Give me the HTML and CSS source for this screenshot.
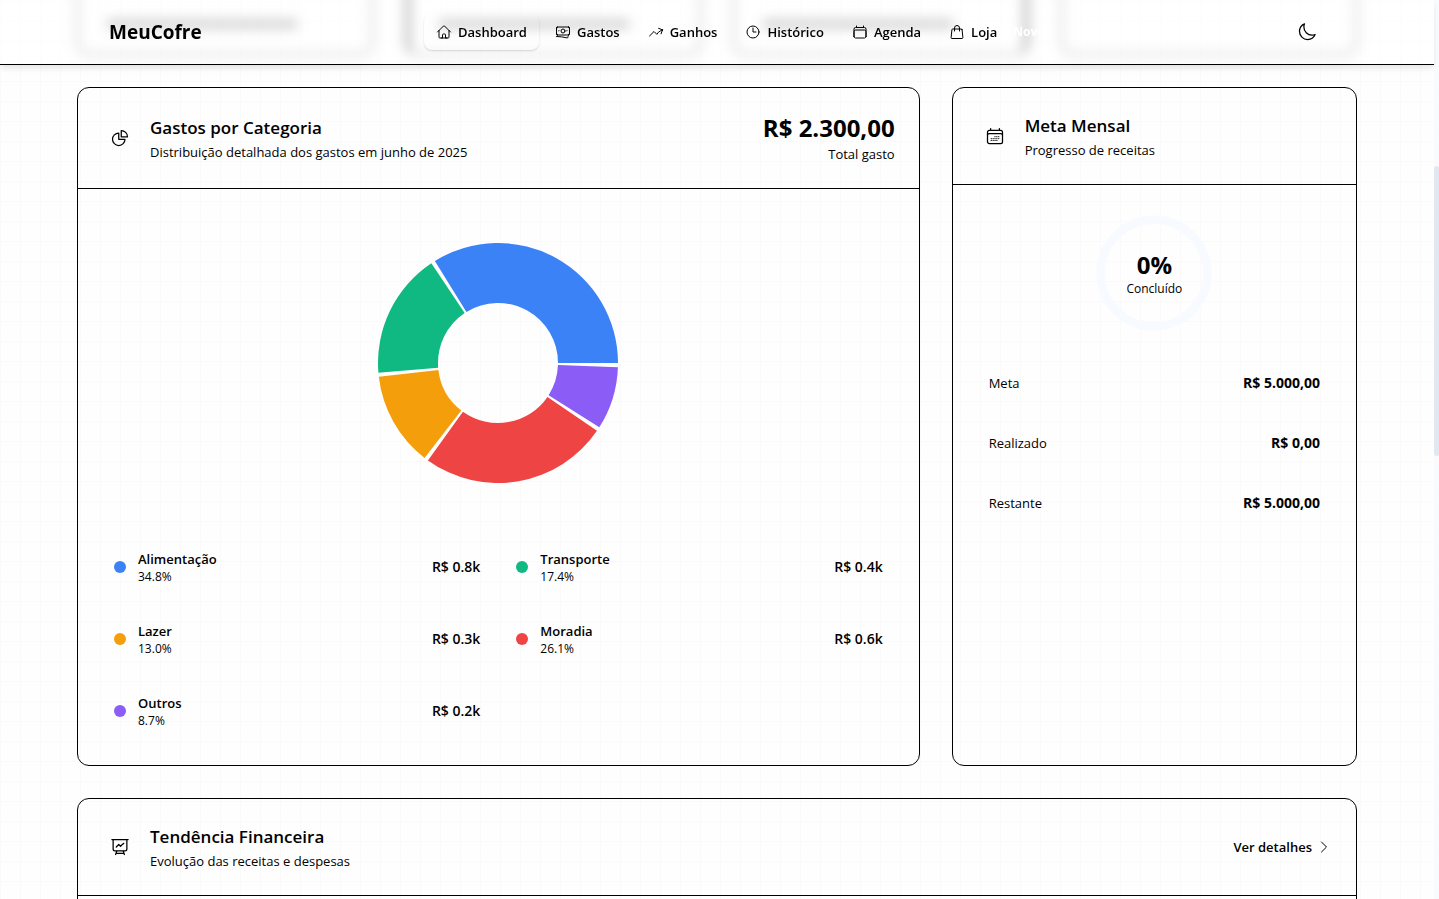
FILE: index.html
```html
<!DOCTYPE html>
<html lang="pt-BR">
  <head>
    <meta charset="UTF-8" />
    <meta name="viewport" content="width=device-width, initial-scale=1.0" />
    <title>MeuCofre</title>
    <link rel="stylesheet" href="styles.css">
  </head>
  <body>
    <header class="topbar">
      <div class="topbar-inner">
        <a class="logo" href="#">MeuCofre</a>
        <nav class="nav">
          <a class="nav-link active" href="#">
            <svg class="icon-sm" viewBox="0 0 24 24"><path d="m2.25 12 8.954-8.955a1.126 1.126 0 0 1 1.591 0L21.75 12M4.5 9.75v10.125c0 .621.504 1.125 1.125 1.125H9.75v-4.875c0-.621.504-1.125 1.125-1.125h2.25c.621 0 1.125.504 1.125 1.125V21h4.125c.621 0 1.125-.504 1.125-1.125V9.75M8.25 21h8.25" /></svg>
            Dashboard
          </a>
          <a class="nav-link" href="#">
            <svg class="icon-sm" viewBox="0 0 24 24"><path d="M2.25 18.75a60.07 60.07 0 0 1 15.797 2.101c.727.198 1.453-.342 1.453-1.096V18.75M3.75 4.5v.75A.75.75 0 0 1 3 6h-.75m0 0v-.375c0-.621.504-1.125 1.125-1.125H20.25M2.25 6v9m18-10.5v.75c0 .414.336.75.75.75h.75m-1.5-1.5h.375c.621 0 1.125.504 1.125 1.125v9.75c0 .621-.504 1.125-1.125 1.125h-.375m1.5-1.5H21a.75.75 0 0 0-.75.75v.75m0 0H3.75m0 0h-.375a1.125 1.125 0 0 1-1.125-1.125V15m1.5 1.5v-.75A.75.75 0 0 0 3 15h-.75M15 10.5a3 3 0 1 1-6 0 3 3 0 0 1 6 0Zm3 0h.008v.008H18V10.5Zm-12 0h.008v.008H6V10.5Z" /></svg>
            Gastos
          </a>
          <a class="nav-link" href="#">
            <svg class="icon-sm" viewBox="0 0 24 24"><path d="M2.25 18 9 11.25l4.306 4.306a11.95 11.95 0 0 1 5.814-5.518l2.74-1.22m0 0-5.94-2.281m5.94 2.28-2.28 5.941" /></svg>
            Ganhos
          </a>
          <a class="nav-link" href="#">
            <svg class="icon-sm" viewBox="0 0 24 24"><path d="M12 6v6h4.5m4.5 0a9 9 0 1 1-18 0 9 9 0 0 1 18 0Z" /></svg>
            Histórico
          </a>
          <a class="nav-link" href="#">
            <svg class="icon-sm" viewBox="0 0 24 24"><path d="M6.75 3v2.25M17.25 3v2.25M3 18.75V7.5a2.25 2.25 0 0 1 2.25-2.25h13.5A2.25 2.25 0 0 1 21 7.5v11.25m-18 0A2.25 2.25 0 0 0 5.25 21h13.5A2.25 2.25 0 0 0 21 18.75m-18 0v-7.5A2.25 2.25 0 0 1 5.25 9h13.5A2.25 2.25 0 0 1 21 11.25v7.5" /></svg>
            Agenda
          </a>
          <a class="nav-link" href="#">
            <svg class="icon-sm" viewBox="0 0 24 24"><path d="M15.75 10.5V6a3.75 3.75 0 1 0-7.5 0v4.5m11.356-1.993 1.263 12c.07.665-.45 1.243-1.119 1.243H4.25a1.125 1.125 0 0 1-1.12-1.243l1.264-12A1.125 1.125 0 0 1 5.513 7.5h12.974c.576 0 1.059.435 1.119 1.007Z" /></svg>
            Loja
            <span class="badge">Novo</span>
          </a>
        </nav>
        <button class="theme-btn" type="button" aria-label="Alternar tema">
          <svg class="icon" viewBox="0 0 24 24"><path d="M21.752 15.002A9.72 9.72 0 0 1 18 15.75c-5.385 0-9.75-4.365-9.75-9.75 0-1.33.266-2.597.748-3.752A9.753 9.753 0 0 0 3 11.25C3 16.635 7.365 21 12.75 21a9.753 9.753 0 0 0 9.002-5.998Z" /></svg>
        </button>
      </div>
    </header>

    <div class="scrollbar"><div class="thumb"></div></div>

    <main class="page">
      <!-- bottom of the summary cards, under the header -->
      <section class="summary">
        <div class="summary-card"><span class="bar"></span></div>
        <div class="summary-card accent-left"><span class="bar"></span></div>
        <div class="summary-card accent-right"><span class="bar"></span></div>
        <div class="summary-card"></div>
      </section>

      <section class="grid">
        <article class="card wide">
          <div class="card-header">
            <div class="heading">
              <svg class="icon" viewBox="0 0 24 24"><path d="M10.5 6a7.5 7.5 0 1 0 7.5 7.5h-7.5V6Z" /><path d="M13.5 10.5H21A7.5 7.5 0 0 0 13.5 3v7.5Z" /></svg>
              <div>
                <h3>Gastos por Categoria</h3>
                <p>Distribuição detalhada dos gastos em junho de 2025</p>
              </div>
            </div>
            <div class="total">
              <div class="big">R$ 2.300,00</div>
              <p>Total gasto</p>
            </div>
          </div>
          <div class="card-body">
            <div class="chart">
              <svg id="donut" width="240" height="240" viewBox="-120 -120 240 240"></svg>
            </div>
            <div class="legend">
              <div class="legend-item">
                <span class="dot blue"></span>
                <div class="label"><strong>Alimentação</strong><small>34.8%</small></div>
                <span class="value">R$ 0.8k</span>
              </div>
              <div class="legend-item">
                <span class="dot green"></span>
                <div class="label"><strong>Transporte</strong><small>17.4%</small></div>
                <span class="value">R$ 0.4k</span>
              </div>
              <div class="legend-item">
                <span class="dot orange"></span>
                <div class="label"><strong>Lazer</strong><small>13.0%</small></div>
                <span class="value">R$ 0.3k</span>
              </div>
              <div class="legend-item">
                <span class="dot red"></span>
                <div class="label"><strong>Moradia</strong><small>26.1%</small></div>
                <span class="value">R$ 0.6k</span>
              </div>
              <div class="legend-item">
                <span class="dot purple"></span>
                <div class="label"><strong>Outros</strong><small>8.7%</small></div>
                <span class="value">R$ 0.2k</span>
              </div>
            </div>
          </div>
        </article>

        <article class="card">
          <div class="card-header">
            <div class="heading">
              <svg class="icon" viewBox="0 0 24 24"><path d="M6.75 3v2.25M17.25 3v2.25M3 18.75V7.5a2.25 2.25 0 0 1 2.25-2.25h13.5A2.25 2.25 0 0 1 21 7.5v11.25m-18 0A2.25 2.25 0 0 0 5.25 21h13.5A2.25 2.25 0 0 0 21 18.75m-18 0v-7.5A2.25 2.25 0 0 1 5.25 9h13.5A2.25 2.25 0 0 1 21 11.25v7.5m-9-6h.008v.008H12v-.008ZM12 15h.008v.008H12V15Zm0 2.25h.008v.008H12v-.008ZM9.75 15h.008v.008H9.75V15Zm0 2.25h.008v.008H9.75v-.008ZM7.5 15h.008v.008H7.5V15Zm0 2.25h.008v.008H7.5v-.008Zm6.75-4.5h.008v.008h-.008v-.008Zm0 2.25h.008v.008h-.008V15Zm0 2.25h.008v.008h-.008v-.008Zm2.25-4.5h.008v.008H16.5v-.008Zm0 2.25h.008v.008H16.5V15Z" /></svg>
              <div>
                <h3>Meta Mensal</h3>
                <p>Progresso de receitas</p>
              </div>
            </div>
          </div>
          <div class="card-body">
            <div class="progress">
              <svg class="ring" viewBox="0 0 120 120"><circle cx="60" cy="60" r="50" /></svg>
              <div class="progress-text">
                <div class="big">0%</div>
                <small>Concluído</small>
              </div>
            </div>
            <dl class="goals">
              <div class="goal"><dt>Meta</dt><dd>R$ 5.000,00</dd></div>
              <div class="goal"><dt>Realizado</dt><dd>R$ 0,00</dd></div>
              <div class="goal"><dt>Restante</dt><dd>R$ 5.000,00</dd></div>
            </dl>
          </div>
        </article>

        <article class="card full">
          <div class="card-header">
            <div class="heading">
              <svg class="icon" viewBox="0 0 24 24"><path d="M3.75 3v11.25A2.25 2.25 0 0 0 6 16.5h2.25M3.75 3h-1.5m1.5 0h16.5m0 0h1.5m-1.5 0v11.25A2.25 2.25 0 0 1 18 16.5h-2.25m-7.5 0h7.5m-7.5 0-1 3m8.5-3 1 3m0 0 .5 1.5m-.5-1.5h-9.5m0 0-.5 1.5m.75-9 3-3 2.148 2.148A12.061 12.061 0 0 1 16.5 7.605" /></svg>
              <div>
                <h3>Tendência Financeira</h3>
                <p>Evolução das receitas e despesas</p>
              </div>
            </div>
            <a class="details" href="#">
              Ver detalhes
              <svg class="icon-sm" viewBox="0 0 24 24"><path d="m8.25 4.5 7.5 7.5-7.5 7.5" /></svg>
            </a>
          </div>
          <div class="card-body trend"></div>
        </article>
      </section>
    </main>

    <script src="script.js"></script>
  </body>
</html>
```
FILE: styles.css
```css
* {
  box-sizing: border-box;
  margin: 0;
  padding: 0;
}

body {
  height: 100vh;
  overflow: hidden;
  padding-right: 5px;
  font-family: "Segoe UI", "Open Sans", "Noto Sans", sans-serif;
  font-size: 13px;
  line-height: 20px;
  color: #000;
  background-color: #fefefe;
  background-image:
    linear-gradient(#fafafa 1px, transparent 1px),
    linear-gradient(90deg, #fafafa 1px, transparent 1px);
  background-size: 20px 20px;
  background-position: 0 1px;
}

a {
  color: inherit;
  text-decoration: none;
}

small {
  display: block;
  font-size: 12px;
  line-height: 16px;
}

svg {
  flex-shrink: 0;
}

.icon,
.icon-sm {
  width: 20px;
  height: 20px;
  fill: none;
  stroke: currentColor;
  stroke-width: 1.5;
  stroke-linecap: round;
  stroke-linejoin: round;
}
.icon-sm {
  width: 16px;
  height: 16px;
}

/* header */
.topbar {
  position: fixed;
  top: 0;
  left: 0;
  right: 5px;
  z-index: 10;
  border-bottom: 1px solid #000;
  background-color: rgba(255, 255, 255, 0.6);
  box-shadow: 0 4px 6px -1px rgba(0, 0, 0, 0.1);
}
.topbar-inner {
  display: flex;
  justify-content: space-between;
  align-items: center;
  max-width: 1280px;
  height: 64px;
  margin: 0 auto;
  padding: 0 32px;
}
.logo {
  font-size: 19px;
  line-height: 28px;
  font-weight: 700;
}
.nav {
  display: flex;
  gap: 4px;
}
.nav-link {
  display: flex;
  align-items: center;
  gap: 6px;
  padding: 8px 12px;
  border-radius: 8px;
  font-weight: 600;
}
.nav-link.active {
  box-shadow: 0 1px 2px rgba(0, 0, 0, 0.15);
}
.badge {
  padding: 0 10px;
  font-size: 12px;
  line-height: 20px;
  font-weight: 700;
  color: #fff;
}
.theme-btn {
  display: flex;
  padding: 8px;
  border: none;
  background: none;
  color: inherit;
  cursor: pointer;
}

.scrollbar {
  position: fixed;
  top: 0;
  right: 0;
  bottom: 0;
  width: 5px;
  padding-top: 166px;
  background-color: #f8fafc;
}
.thumb {
  height: 290px;
  border-radius: 3px;
  background-color: #e2e8f0;
}

/* content */
.page {
  display: flex;
  flex-direction: column;
  gap: 32px;
  max-width: 1280px;
  margin: 0 auto;
}
.summary {
  display: grid;
  grid-template-columns: repeat(4, 1fr);
  gap: 32px;
  margin-top: -45px;
  filter: blur(6px);
}
.summary-card {
  height: 100px;
  padding: 62px 28px 0;
  border: 2px solid #888;
  border-radius: 12px;
  box-shadow: 0 0 10px rgba(0, 0, 0, 0.12);
}
.summary-card .bar {
  display: block;
  width: 190px;
  height: 10px;
  background-color: #999;
}
.accent-left {
  border-left: 6px solid #666;
}
.accent-right {
  border-right: 6px solid #666;
}

.grid {
  display: grid;
  grid-template-columns: repeat(3, 1fr);
  gap: 32px;
}
.card {
  border: 1px solid #000;
  border-radius: 12px;
}
.wide {
  grid-column: span 2;
}
.full {
  grid-column: 1 / -1;
}
.card-header {
  display: flex;
  justify-content: space-between;
  align-items: center;
  padding: 24px;
  border-bottom: 1px solid #000;
}
.card-body {
  padding: 24px;
}
.heading {
  display: flex;
  align-items: center;
  gap: 20px;
  padding-left: 8px;
}
.heading h3 {
  font-size: 17px;
  line-height: 28px;
  font-weight: 600;
}
.big {
  font-size: 24px;
  line-height: 32px;
  font-weight: 700;
}
.total {
  text-align: right;
}
.details {
  display: flex;
  align-items: center;
  gap: 4px;
  font-weight: 600;
}

/* category chart */
.chart {
  display: flex;
  justify-content: center;
  align-items: center;
  height: 300px;
  margin-bottom: 24px;
}
.legend {
  display: grid;
  grid-template-columns: repeat(2, 1fr);
  gap: 12px;
}
.legend-item {
  display: flex;
  align-items: center;
  gap: 12px;
  padding: 12px;
}
.label {
  flex: 1;
}
.label strong {
  display: block;
  font-weight: 600;
}
.value {
  font-size: 14px;
  font-weight: 600;
}
.dot {
  width: 12px;
  height: 12px;
  border-radius: 50%;
}
.blue {
  background-color: #3b82f6;
}
.green {
  background-color: #10b981;
}
.orange {
  background-color: #f59e0b;
}
.red {
  background-color: #ef4444;
}
.purple {
  background-color: #8b5cf6;
}

/* monthly goal */
.progress {
  display: grid;
  place-items: center;
  margin-bottom: 24px;
}
.progress > * {
  grid-area: 1 / 1;
}
.ring {
  width: 128px;
  height: 128px;
  fill: none;
  stroke: #f7fafe;
  stroke-width: 8;
}
.progress-text {
  text-align: center;
}
.goals {
  display: flex;
  flex-direction: column;
  gap: 16px;
}
.goal {
  display: flex;
  justify-content: space-between;
  padding: 12px;
}
.goal dd {
  font-size: 14px;
  font-weight: 700;
}

.trend {
  min-height: 300px;
}
```
FILE: script.js
```js
const categories = [
  { value: 800, color: "#3b82f6" },
  { value: 400, color: "#10b981" },
  { value: 300, color: "#f59e0b" },
  { value: 600, color: "#ef4444" },
  { value: 200, color: "#8b5cf6" },
];

const donut = document.getElementById("donut");
const outer = 120;
const inner = 60;
const pad = 2;

function point(radius, angle) {
  const rad = (angle * Math.PI) / 180;
  return `${radius * Math.cos(rad)} ${-radius * Math.sin(rad)}`;
}

const total = categories.reduce((sum, c) => sum + c.value, 0);
const available = 360 - pad * categories.length;
let start = 0;

categories.forEach((category) => {
  const end = start + (category.value / total) * available;
  const slice = document.createElementNS("http://www.w3.org/2000/svg", "path");
  slice.setAttribute(
    "d",
    `M${point(outer, start)} A${outer} ${outer} 0 0 0 ${point(outer, end)}
     L${point(inner, end)} A${inner} ${inner} 0 0 1 ${point(inner, start)} Z`
  );
  slice.setAttribute("fill", category.color);
  donut.appendChild(slice);
  start = end + pad;
});
```
